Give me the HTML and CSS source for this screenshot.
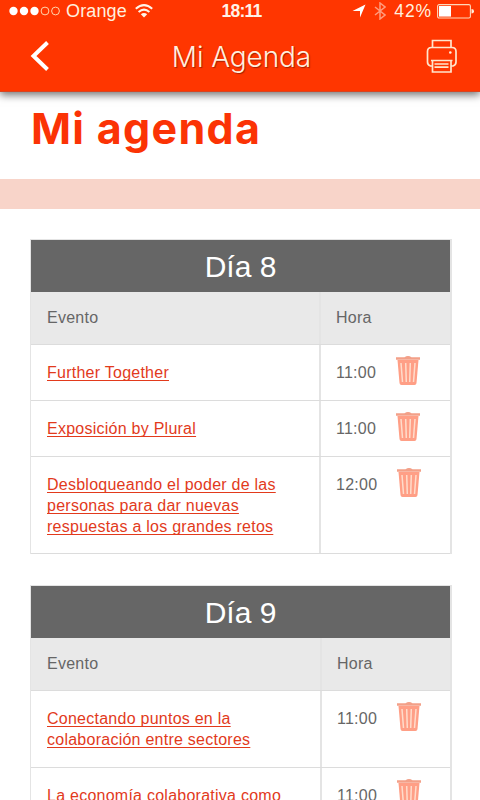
FILE: index.html
```html
<!DOCTYPE html>
<html lang="es">
<head>
<meta charset="utf-8">
<title>Mi Agenda</title>
<link rel="stylesheet" href="styles.css">
</head>
<body>
<svg class="defs" aria-hidden="true">
  <symbol id="trash" viewBox="0 0 26 31">
    <path d="M1 2.200h8.500q3.500-2.200 7 0H25v2.600H1z" fill="#f3a088"/>
    <path d="M2.500 5h21l-2 23q-.2 2-2 2h-13q-1.800 0-2-2z" fill="#ff9f86"/>
    <path d="M6 8l1.500 19M10.700 8l.6 19M15.300 8l-.6 19M20 8l-1.500 19" stroke="#ffdccb" stroke-width="1.500" fill="none"/>
  </symbol>
</svg>
<header class="top">
  <div class="status">
    <div class="side">
      <svg class="signal" width="52" height="10" viewBox="0 0 52 10"><g fill="#fff"><circle cx="4.500" cy="5" r="4.200"/><circle cx="15" cy="5" r="4.200"/><circle cx="25.500" cy="5" r="4.200"/></g><g fill="none" stroke="#ffd5ab"><circle cx="36" cy="5" r="3.900"/><circle cx="46.500" cy="5" r="3.900"/></g></svg>
      <span class="carrier">Orange</span>
      <svg class="wifi" width="18" height="14" viewBox="0 0 18 14"><g fill="none" stroke="#fff4e8" stroke-width="2"><path d="M.8 4.800q8.200-7.300 16.400 0M3.600 8q5.400-4.800 10.800 0"/></g><path d="M5.800 10.300q3.200-2.600 6.400 0L9 13.600z" fill="#fff4e8"/></svg>
    </div>
    <b class="clock">18:11</b>
    <div class="side right">
      <svg width="14" height="14" viewBox="0 0 14 14"><path d="M13.500.5L8 13.500V7H.5z" fill="#fff"/></svg>
      <svg class="bt" width="12" height="18" viewBox="0 0 12 18"><path d="M1 5l10 8-5 4V1l5 4-10 8" fill="none" stroke="#ff9c7d" stroke-width="1.500"/></svg>
      <span class="percent">42%</span>
      <svg class="battery" width="37" height="15" viewBox="0 0 37 15"><rect x=".6" y=".6" width="32.800" height="13.400" rx="1.500" fill="none" stroke="#ffd7b8" stroke-width="1.100"/><path d="M2 2h12v10.600H2z" fill="#fff"/><path d="M34.500 5q2.500 0 2.500 2.300t-2.500 2.300z" fill="#fff0dd"/></svg>
    </div>
  </div>
  <nav class="nav">
    <svg class="back" width="20" height="32" viewBox="0 0 20 32"><path d="M17.500 2.500L3.500 16l14 13.500" fill="none" stroke="#fff" stroke-width="4"/></svg>
    <span class="nav-title">Mi Agenda</span>
    <svg class="print" width="32" height="34" viewBox="0 0 32 34"><g fill="none" stroke="#ffe6cd" stroke-width="1.700"><path d="M6.500 8.500V1.500h18.500v7M6.500 27H4.500Q1.500 26 1.500 23V12.500q0-4 4-4h20.500q4 0 4 4V23q0 3-3 4h-2M5 21.500h21.500M6.500 21.500v11.500h18.500V21.500M8.500 25h14M8.500 28.200h14"/></g><circle cx="24.300" cy="13.500" r="1.300" fill="#fff2df"/></svg>
  </nav>
</header>
<main>
  <h1>Mi agenda</h1>
  <div class="band"></div>
  <section class="day">
    <h2>Día 8</h2>
    <div class="row head"><div class="cell">Evento</div><div class="cell">Hora</div></div>
    <div class="row"><div class="cell"><a>Further Together</a></div><div class="cell time">11:00<svg class="trash"><use href="#trash"/></svg></div></div>
    <div class="row"><div class="cell"><a>Exposición by Plural</a></div><div class="cell time">11:00<svg class="trash"><use href="#trash"/></svg></div></div>
    <div class="row last"><div class="cell"><a>Desbloqueando el poder de las<br>personas para dar nuevas<br>respuestas a los grandes retos</a></div><div class="cell time">12:00<svg class="trash"><use href="#trash"/></svg></div></div>
  </section>
  <section class="day second">
    <h2>Día 9</h2>
    <div class="row head"><div class="cell">Evento</div><div class="cell">Hora</div></div>
    <div class="row"><div class="cell"><a>Conectando puntos en la<br>colaboración entre sectores</a></div><div class="cell time">11:00<svg class="trash"><use href="#trash"/></svg></div></div>
    <div class="row"><div class="cell"><a>La economía colaborativa como</a></div><div class="cell time">11:00<svg class="trash"><use href="#trash"/></svg></div></div>
  </section>
</main>
</body>
</html>
```
FILE: styles.css
```css
* { box-sizing: border-box; }
html, body { height: 800px; overflow: hidden; }
body { margin: 0; background: #fff; color: #666; font: 16px/21px "Liberation Sans", Arial, sans-serif; }
svg { display: block; flex: none; }
.defs { display: none; }
.top { position: relative; height: 92px; background: #ff3600; border-bottom: 1px solid #d94420; box-shadow: 0 3px 8px rgba(0,0,0,.55); color: #ffefdf; }
.status { height: 21px; display: grid; grid-template-columns: 1fr auto 1fr; align-items: center; padding: 0 6px 0 9px; }
.side { display: flex; align-items: center; }
.right { justify-content: flex-end; }
.carrier { font-size: 18px; line-height: 21px; margin: 1px 0 0 5px; letter-spacing: .15px; }
.wifi { margin-left: 8px; }
.clock { font-size: 17.5px; letter-spacing: -.8px; margin-top: 1px; color: #fff3e8; }
.bt { margin-left: 8px; }
.percent { font-size: 17.5px; margin: 1px 0 0 8px; letter-spacing: .9px; }
.battery { margin-left: 5px; }
.nav { height: 70px; display: grid; grid-template-columns: 50px 1fr 50px; align-items: center; padding: 0 22px 0 30px; }
.nav-title { text-align: center; margin: 2px 5px 0 0; font: 300 28px/40px Inter, "Liberation Sans", sans-serif; letter-spacing: -.1px; text-shadow: 1px 1px 1px rgba(100,20,0,.6); }
.print { justify-self: end; }
h1 { margin: 0; height: 87px; padding: 12px 0 0 31px; font: 700 43px/48px Inter, "Open Sans", sans-serif; letter-spacing: 1.3px; color: #fb3305; }
.band { height: 30px; background: #f8d4c9; }
.day { width: 422px; margin: 30px 0 0 30px; border: solid #e4e4e4; border-width: 1px 2px 0 1px; }
.second { margin-top: 31px; }
h2 { margin: 0; height: 52px; background: #666; color: #fff; text-align: center; font-size: 30px; line-height: 54px; font-weight: 400; }
.row { display: grid; grid-template-columns: 288px 1fr; border-bottom: 1px solid #dcdcdc; }
.cell { padding: 17px 0 17px 16px; letter-spacing: .25px; }
.cell + .cell { border-left: 2px solid #e4e4e4; padding-left: 15px; }
.head { background: #e9e9e9; }
.head .cell { padding-top: 15px; padding-bottom: 16px; }
.time { display: flex; align-items: flex-start; }
.last .cell { padding-bottom: 16px; }
.second .row { grid-template-columns: 289px 1fr; }
.trash { width: 26px; height: 31px; margin: -7px 0 -3px 19px; }
a { color: #e23a1c; text-decoration: underline; text-underline-offset: 2px; text-decoration-skip-ink: none; }
```
